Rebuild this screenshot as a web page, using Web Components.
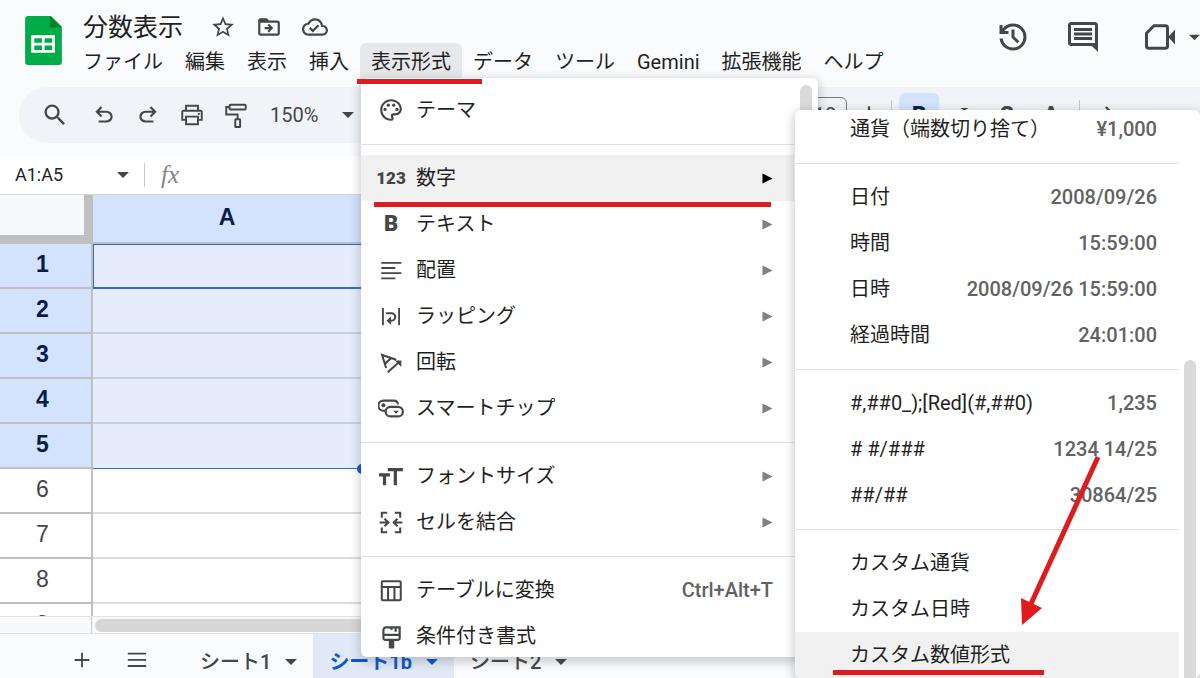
<!DOCTYPE html>
<html lang="ja">
<head>
<meta charset="utf-8">
<title>分数表示</title>
<style>
  html, body {
    margin: 0;
    height: 100%;
    overflow: hidden;
  }
  body {
    font-family: Roboto, "Noto Sans CJK JP", sans-serif;
    font-size: 20px;
    line-height: 24px;
    color: #1f1f1f;
    background-color: #f9fbfd;
  }
</style>
</head>
<body>
<sheet-app>
  <sheet-header slot="header"></sheet-header>
  <tool-bar slot="toolbar"></tool-bar>
  <formula-bar slot="formula"></formula-bar>
  <sheet-grid slot="grid"></sheet-grid>
  <tab-strip slot="tabs"></tab-strip>

  <drop-menu slot="overlay" class="format" aria-label="表示形式">
    <menu-item icon="palette">テーマ</menu-item>
    <menu-rule></menu-rule>
    <menu-item icon="number" arrow active>数字</menu-item>
    <menu-item icon="bold" arrow>テキスト</menu-item>
    <menu-item icon="align" arrow>配置</menu-item>
    <menu-item icon="wrap" arrow>ラッピング</menu-item>
    <menu-item icon="rotate" arrow>回転</menu-item>
    <menu-item icon="chip" arrow>スマートチップ</menu-item>
    <menu-rule></menu-rule>
    <menu-item icon="size" arrow>フォントサイズ</menu-item>
    <menu-item icon="merge" arrow>セルを結合</menu-item>
    <menu-rule></menu-rule>
    <menu-item icon="table" hint="Ctrl+Alt+T">テーブルに変換</menu-item>
    <menu-item icon="brush">条件付き書式</menu-item>
  </drop-menu>

  <drop-menu slot="overlay" class="number" aria-label="数字">
    <menu-item hint="¥1,000">通貨（端数切り捨て）</menu-item>
    <menu-rule></menu-rule>
    <menu-item hint="2008/09/26">日付</menu-item>
    <menu-item hint="15:59:00">時間</menu-item>
    <menu-item hint="2008/09/26 15:59:00">日時</menu-item>
    <menu-item hint="24:01:00">経過時間</menu-item>
    <menu-rule></menu-rule>
    <menu-item hint="1,235">#,##0_);[Red](#,##0)</menu-item>
    <menu-item hint="1234 14/25"># #/###</menu-item>
    <menu-item hint="30864/25">##/##</menu-item>
    <menu-rule></menu-rule>
    <menu-item>カスタム通貨</menu-item>
    <menu-item>カスタム日時</menu-item>
    <menu-item active>カスタム数値形式</menu-item>
  </drop-menu>

  <red-marks slot="overlay"></red-marks>
</sheet-app>

<script>
const icons = {
  logo: '<path fill="#00ac47" d="M2 0h15l7 7v23a2 2 0 0 1-2 2H2a2 2 0 0 1-2-2V2a2 2 0 0 1 2-2z"/><path fill="#00832d" d="M16 0l8 7.500h-8z"/><path fill="#fff" d="M4 12.500h15.500V24H4z"/><path fill="#00ac47" d="M6 14.500h5v3H6zM12.700 14.500h5v3h-5zM6 19.200h5v3H6zM12.700 19.200h5v3h-5z"/>',
  star: '<path d="M22 9.240l-7.190-.62L12 2 9.190 8.630 2 9.240l5.460 4.730L5.820 21 12 17.270 18.180 21l-1.630-7.030L22 9.240zM12 15.400l-3.760 2.270 1-4.280-3.320-2.880 4.380-.38L12 6.100l1.710 4.040 4.380.38-3.320 2.880 1 4.280L12 15.400z"/>',
  move: '<path d="M20 6h-8l-2-2H4c-1.100 0-2 .9-2 2v12c0 1.100.9 2 2 2h16c1.100 0 2-.9 2-2V8c0-1.100-.9-2-2-2zm0 12H4V8h16v10z"/><path d="M12.160 12H8v2h4.160l-1.590 1.590L11.990 17 16 13.010 11.990 9l-1.410 1.410z"/>',
  cloud: '<path d="M19.350 10.040C18.670 6.590 15.640 4 12 4 9.110 4 6.600 5.640 5.350 8.040 2.340 8.360 0 10.910 0 14c0 3.310 2.690 6 6 6h13c2.760 0 5-2.240 5-5 0-2.640-2.050-4.780-4.650-4.960zM19 18H6c-2.210 0-4-1.790-4-4 0-2.050 1.530-3.760 3.560-3.970l1.070-.11.5-.95C8.080 7.140 9.940 6 12 6c2.620 0 4.880 1.860 5.390 4.430l.3 1.500 1.530.11c1.560.1 2.780 1.410 2.780 2.960 0 1.650-1.350 3-3 3zm-9-3.820l-2.090-2.090L6.500 13.500 10 17l6.010-6.010-1.410-1.410z"/>',
  history: '<path d="M12 21q-3.450 0-6.012-2.287T3.050 13H5.100q.35 2.600 2.313 4.300T12 19q2.925 0 4.963-2.037T19 12t-2.037-4.962T12 5q-1.725 0-3.225.8T6.250 8H9v2H3V4h2v2.350q1.275-1.600 3.113-2.475T12 3q1.875 0 3.513.713t2.850 1.924 1.925 2.850T21 12t-.712 3.513-1.925 2.850-2.850 1.925T12 21m2.800-4.800L11 12.400V7h2v4.600l3.200 3.200z"/>',
  comment: '<path d="M20 2H4c-1.100 0-2 .9-2 2v12c0 1.100.9 2 2 2h14l4 4V4c0-1.100-.9-2-2-2zm0 14H4V4h16zM6 12h12v2H6zm0-3h12v2H6zm0-3h12v2H6z"/>',
  video: '<path fill="none" stroke="currentColor" stroke-width="2" d="M8 4.500h7.500a1.500 1.500 0 0 1 1.500 1.500v12a1.500 1.500 0 0 1-1.500 1.500H4.500A1.500 1.500 0 0 1 3 18V9.500z"/><path d="M17.500 12l4.500-5v10z"/>',
  search: '<path d="M15.500 14h-.79l-.28-.27A6.471 6.471 0 0 0 16 9.500 6.500 6.500 0 1 0 9.500 16c1.610 0 3.090-.59 4.230-1.570l.27.28v.79l5 4.990L20.490 19l-4.990-5zm-6 0C7.010 14 5 11.990 5 9.500S7.010 5 9.500 5 14 7.010 14 9.500 11.990 14 9.500 14z"/>',
  undo: '<path d="M7 19v-2h7.100q1.575 0 2.738-1T18 13.500 16.837 11 14.100 10H7.800l2.600 2.600L9 14 4 9l5-5 1.400 1.400L7.800 8h6.300q2.425 0 4.163 1.575T20 13.500t-1.737 3.925T14.100 19z"/>',
  redo: '<path transform="matrix(-1 0 0 1 24 0)" d="M7 19v-2h7.100q1.575 0 2.738-1T18 13.500 16.837 11 14.100 10H7.800l2.600 2.600L9 14 4 9l5-5 1.400 1.400L7.800 8h6.300q2.425 0 4.163 1.575T20 13.500t-1.737 3.925T14.100 19z"/>',
  print: '<path fill="none" stroke="currentColor" stroke-width="1.800" d="M6.500 16.500H3V9.500A1.500 1.500 0 0 1 4.500 8h15A1.500 1.500 0 0 1 21 9.500v7h-3.500M6.500 8V3.500h11V8M6.500 13.500h11V20.500h-11z"/><circle cx="18.300" cy="11" r="1"/>',
  paint: '<g fill="none" stroke="currentColor" stroke-width="1.800"><rect x="6" y="2.500" width="15" height="4.500" rx="1"/><path d="M6 4.700H3V11.500h10.500V16"/><rect x="11.300" y="16" width="4.500" height="7" rx=".5"/></g>',
  plus: '<path d="M11 4h2v7h7v2h-7v7h-2v-7H4v-2h7z"/>',
  list: '<path d="M2 4h20v2H2zm0 6.800h20v2H2zm0 6.700h20v2H2z"/>',
  fill: '<path transform="translate(4 4)" d="M16.560 8.940L7.620 0 6.210 1.410l2.380 2.380-5.150 5.150a1.490 1.490 0 0 0 0 2.120l5.500 5.500c.29.29.68.44 1.060.44s.77-.15 1.060-.44l5.500-5.500c.59-.58.59-1.530 0-2.120zM5.210 10L10 5.210 14.790 10H5.210z"/>',
  caret: '<path d="M0 6h24L12 18z"/>',
  right: '<path d="M1 1l22 11L1 23z"/>',
  palette: '<path d="M12 22C6.490 22 2 17.510 2 12S6.490 2 12 2s10 4.040 10 9c0 3.310-2.690 6-6 6h-1.770c-.28 0-.5.22-.5.5 0 .12.05.23.13.33.41.47.64 1.060.64 1.670 0 1.380-1.120 2.500-2.500 2.500zm0-18c-4.410 0-8 3.590-8 8s3.590 8 8 8c.28 0 .5-.22.5-.5 0-.16-.08-.28-.14-.35-.41-.46-.63-1.050-.63-1.650 0-1.380 1.120-2.500 2.500-2.500H16c2.210 0 4-1.790 4-4 0-3.860-3.590-7-8-7z"/><circle cx="6.500" cy="11.500" r="1.500"/><circle cx="9.500" cy="7.500" r="1.500"/><circle cx="14.500" cy="7.500" r="1.500"/><circle cx="17.500" cy="11.500" r="1.500"/>',
  align: '<path d="M3 4.500h18.500v1.700H3zm0 4.800h13v1.700H3zm0 4.800h18.500v1.700H3zm0 4.800h13v1.700H3z"/>',
  wrap: '<path d="M3.700 4.500h1.700v16H3.700zM18.600 4.500h1.700v16h-1.700z"/><path fill="none" stroke="currentColor" stroke-width="1.900" d="M7.500 9.500h5a3.300 3.300 0 0 1 0 6.800H9.500"/><path d="M12 12.500v7.500l-4.200-3.700z"/>',
  rotate: '<g fill="none" stroke="currentColor" stroke-width="1.900"><path d="M7.500 17.500L3.800 5.500l13 4.500M6.500 13.500l5.500-5M9 21.500l10.500-9.500"/></g><path d="M15.500 10.500h6v6z"/>',
  chip: '<g fill="none" stroke="currentColor" stroke-width="2"><path d="M7.500 14.500H5A4.600 4.600 0 0 1 5 5.200h9.500a4 4 0 0 1 4 3.500"/><rect x="7" y="11" width="16" height="8.800" rx="4.400"/></g><circle cx="5" cy="9.500" r="1.900"/><path d="M14 14.500h5.400l-2.700 2.700z"/>',
  size: '<path d="M9 4.500h14v3h-5.500v13h-3v-13H9zM1 9.500h10v3H7.500v8h-3v-8H1z"/>',
  merge: '<g fill="none" stroke="currentColor" stroke-width="1.900"><path d="M8.500 3.500h-5v4.500M15.500 3.500h5v4.500M8.500 21.500h-5V17M15.500 21.500h5V17M1.500 12.500h7.500M6 9l3.500 3.500L6 16M22.500 12.500H15M18 9l-3.500 3.500L18 16"/></g>',
  table: '<g fill="none" stroke="currentColor" stroke-width="1.900"><rect x="3.500" y="4" width="17.500" height="17.500" rx="1"/><path d="M3.500 9.200h17.500M9.300 9.200V21.500M15.200 9.200V21.500"/></g>',
  brush: '<g fill="none" stroke="currentColor" stroke-width="2"><path d="M7.500 4H20v10a1.500 1.500 0 0 1-1.500 1.500H6.500A1.500 1.500 0 0 1 5 14V6.500A2.500 2.500 0 0 1 7.500 4zM5 11h15M12.500 4v2.500M16.300 4v4"/></g><path d="M10 15.500h5v7a1 1 0 0 1-1 1h-3a1 1 0 0 1-1-1z"/>'
}

// icons that are characters stay text
const glyphs = { number: '123', bold: 'B', italic: 'I', strike: 'S', color: 'A' }

function define (name, html, setup) {
  const template = document.createElement('template')
  template.innerHTML = html
  customElements.define(name, class extends HTMLElement {
    constructor () {
      super()
      this.attachShadow({ mode: 'open' })
        .appendChild(template.content.cloneNode(true))
      if (setup) {
        setup(this, this.shadowRoot)
      }
    }
  })
}

define('ui-icon', `
  <style>
    :host {
      display: inline-flex;
      flex: none;
      justify-content: center;
      align-items: center;
      width: var(--size, 26px);
      height: var(--size, 26px);
      color: inherit;
    }
    svg {
      display: block;
      width: 100%;
      height: 100%;
      fill: currentColor;
    }
    span {
      font-weight: 900;
      font-size: 22px;
      line-height: 24px;
    }
    .number {
      font-size: 17px;
    }
    .italic {
      font-family: "Liberation Serif", serif;
      font-style: italic;
    }
  </style>
`, (host, root) => {
  const name = host.getAttribute('name')
  if (!name) return
  const holder = document.createElement('template')
  holder.innerHTML = glyphs[name]
    ? `<span class="${name}">${glyphs[name]}</span>`
    : `<svg viewBox="${name === 'logo' ? '0 0 24 32' : '0 0 24 24'}" aria-hidden="true">${icons[name]}</svg>`
  root.appendChild(holder.content)
})

define('sheet-app', `
  <style>
    :host {
      position: relative;
      display: flex;
      flex-direction: column;
      height: 100vh;
      overflow: hidden;
    }
    .grid {
      flex: 1;
      min-height: 0;
      overflow: hidden;
      background-color: white;
    }
    .track {
      display: flex;
      flex: none;
      height: 18px;
      box-sizing: border-box;
      border-top: 1px solid #e1e3e1;
      border-bottom: 1px solid #e1e3e1;
      background-color: #f8f9fa;
    }
    .corner {
      width: 91px;
      border-right: 1px solid #c4c7c5;
    }
    .thumb {
      flex: 1;
      margin: 2px 3px 1px;
      border-radius: 7px;
      background-color: #d6d6d6;
    }
    ::slotted(.format) {
      position: absolute;
      left: 361px;
      top: 78px;
      width: 457px;
      height: 579px;
      --pad-top: 9px;
      --gutter: 24px;
      --thumb-top: 7px;
      --thumb-right: 6px;
    }
    ::slotted(.number) {
      position: absolute;
      left: 795px;
      right: 0;
      top: 110px;
      bottom: 0;
      --pad-top: 0;
      --scrolled: -4px;
      --gutter: 21px;
      --item-left: 55px;
      --item-right: 22px;
      --thumb-top: 250px;
      --thumb-right: 4px;
    }
    ::slotted(red-marks) {
      position: absolute;
      inset: 0;
    }
  </style>
  <slot name="header"></slot>
  <slot name="toolbar"></slot>
  <slot name="formula"></slot>
  <div class="grid"><slot name="grid"></slot></div>
  <div class="track"><div class="corner"></div><div class="thumb"></div></div>
  <slot name="tabs"></slot>
  <slot name="overlay"></slot>
`)

define('sheet-header', `
  <style>
    :host {
      display: flex;
      flex: none;
      height: 87px;
    }
    .logo {
      --size: 49px;
      margin: 16px 4px 0 19px;
    }
    .name {
      display: flex;
      align-items: center;
      height: 43px;
      padding: 11px 0 0 11px;
      box-sizing: border-box;
      color: #444746;
    }
    input {
      width: 117px;
      padding: 0 0 4px;
      border: none;
      background: none;
      font: inherit;
      font-size: 25px;
      color: #1f1f1f;
    }
    button {
      display: flex;
      justify-content: center;
      align-items: center;
      padding: 0;
      border: none;
      background: none;
      font: inherit;
      color: inherit;
    }
    .name button {
      width: 46px;
      --size: 26px;
    }
    nav {
      display: flex;
      white-space: nowrap;
    }
    nav button {
      height: 38px;
      padding: 0 11px;
      border-radius: 6px 6px 0 0;
    }
    nav .open {
      background-color: #e7e8eb;
    }
    .actions {
      display: flex;
      align-items: center;
      height: 74px;
      margin-left: auto;
      color: #444746;
      --size: 36px;
    }
    .actions button {
      width: 70px;
    }
    .actions .meet {
      width: 82px;
      justify-content: flex-end;
      gap: 11px;
    }
    .meet .caret {
      --size: 11px;
    }
  </style>
  <ui-icon class="logo" name="logo"></ui-icon>
  <div>
    <div class="name">
      <input value="分数表示" aria-label="名前">
      <button aria-label="スター"><ui-icon name="star"></ui-icon></button>
      <button aria-label="移動"><ui-icon name="move"></ui-icon></button>
      <button aria-label="保存状況"><ui-icon name="cloud"></ui-icon></button>
    </div>
    <nav>
      <button>ファイル</button>
      <button>編集</button>
      <button>表示</button>
      <button>挿入</button>
      <button class="open">表示形式</button>
      <button>データ</button>
      <button>ツール</button>
      <button>Gemini</button>
      <button>拡張機能</button>
      <button>ヘルプ</button>
    </nav>
  </div>
  <div class="actions">
    <button aria-label="変更履歴"><ui-icon name="history"></ui-icon></button>
    <button aria-label="コメント"><ui-icon name="comment"></ui-icon></button>
    <button class="meet" aria-label="通話"><ui-icon name="video"></ui-icon><ui-icon class="caret" name="caret"></ui-icon></button>
  </div>
`)

define('tool-bar', `
  <style>
    :host {
      display: flex;
      flex: none;
      align-items: center;
      height: 56px;
      margin-left: 19px;
      padding-left: 14px;
      border-radius: 28px 0 0 28px;
      overflow: hidden;
      background-color: #f0f4f9;
      color: #444746;
    }
    button {
      display: flex;
      flex: none;
      justify-content: center;
      align-items: center;
      width: 40px;
      height: 44px;
      margin: 0 2px;
      padding: 0;
      border: none;
      border-radius: 6px;
      background: none;
      font: inherit;
      color: inherit;
    }
    .search {
      margin-right: 7px;
      --size: 28px;
    }
    .on {
      background-color: #d3e3fd;
      color: #041e49;
    }
    label {
      display: flex;
      flex: none;
      align-items: center;
      width: 84px;
      margin: 0 7px 0 12px;
      --size: 12px;
    }
    select {
      flex: 1;
      padding: 0;
      border: none;
      appearance: none;
      background: none;
      font: inherit;
      color: inherit;
    }
    .gap {
      flex: none;
      width: 442px;
    }
    .points {
      flex: none;
      width: 44px;
      height: 36px;
      box-sizing: border-box;
      border: 1px solid #747775;
      border-radius: 6px;
      background: none;
      text-align: center;
      font: inherit;
      color: inherit;
    }
    hr {
      flex: none;
      width: 1px;
      height: 30px;
      margin: 0 5px 0 0;
      border: none;
      background-color: #c7c7c7;
    }
    hr.wide {
      margin-left: 6px;
    }
  </style>
  <button class="search" aria-label="検索"><ui-icon name="search"></ui-icon></button>
  <button aria-label="元に戻す"><ui-icon name="undo"></ui-icon></button>
  <button aria-label="やり直し"><ui-icon name="redo"></ui-icon></button>
  <button aria-label="印刷"><ui-icon name="print"></ui-icon></button>
  <button aria-label="書式を貼り付け"><ui-icon name="paint"></ui-icon></button>
  <label><select aria-label="ズーム"><option>150%</option></select><ui-icon name="caret"></ui-icon></label>
  <div class="gap"></div>
  <input class="points" value="10" aria-label="フォントサイズ">
  <button aria-label="拡大"><ui-icon name="plus"></ui-icon></button>
  <hr>
  <button class="on" aria-label="太字"><ui-icon name="bold"></ui-icon></button>
  <button aria-label="斜体"><ui-icon name="italic"></ui-icon></button>
  <button aria-label="取り消し線"><ui-icon name="strike"></ui-icon></button>
  <button aria-label="文字色"><ui-icon name="color"></ui-icon></button>
  <hr class="wide">
  <button aria-label="塗りつぶし"><ui-icon name="fill"></ui-icon></button>
`)

define('formula-bar', `
  <style>
    :host {
      display: flex;
      flex: none;
      align-items: center;
      height: 39px;
      box-sizing: border-box;
      margin-top: 13px;
      border-bottom: 1px solid #d5d7d6;
      background-color: white;
    }
    input {
      width: 102px;
      padding: 0 0 0 15px;
      border: none;
      background: none;
      font: inherit;
      font-size: 18px;
      color: #1f1f1f;
    }
    ui-icon {
      --size: 12px;
      color: #444746;
    }
    hr {
      width: 1px;
      height: 24px;
      margin: 0 16px 0 15px;
      border: none;
      background-color: #c7c7c7;
    }
    i {
      font-family: "Liberation Serif", serif;
      font-size: 25px;
      color: #80868b;
    }
  </style>
  <input value="A1:A5" aria-label="名前ボックス">
  <ui-icon name="caret"></ui-icon>
  <hr>
  <i>fx</i>
`)

define('sheet-grid', `
  <style>
    :host {
      display: block;
      font-family: "Liberation Sans", Arial, sans-serif;
      font-size: 23px;
      color: #444746;
    }
    table {
      width: 100%;
      table-layout: fixed;
      border-collapse: separate;
      border-spacing: 0;
    }
    th, td {
      box-sizing: border-box;
      height: 45px;
      padding: 0 0 4px;
      border-right: 2px solid #c0c0c0;
      border-bottom: 2px solid #c0c0c0;
      font-weight: normal;
    }
    td {
      border-color: #dcdcdc;
    }
    .index {
      width: 93px;
    }
    .first {
      width: 270px;
    }
    th {
      padding-right: 6px;
    }
    thead th {
      height: 49px;
      padding-right: 0;
    }
    thead .index {
      border-right: 9px solid #c0c0c0;
      border-bottom: 9px solid #c0c0c0;
      background-color: #f8f9fa;
    }
    th.picked {
      background-color: #d3e3fd;
      font-weight: bold;
      color: #041e49;
    }
    td.picked {
      border-color: #c6d0db;
      background-color: #e5edfd;
    }
    td.cursor {
      border: 2px solid #3367d1;
      border-top-width: 1px;
      border-left-width: 1px;
    }
    td.last {
      position: relative;
      border-bottom: 1px solid #3367d1;
    }
    td.last::after {
      content: "";
      position: absolute;
      right: -6px;
      bottom: -6px;
      width: 10px;
      height: 10px;
      border-radius: 50%;
      background-color: #0b57d0;
    }
  </style>
  <table>
    <thead><tr><th class="index"></th><th class="first picked">A</th><th></th></tr></thead>
    <tbody></tbody>
  </table>
`, (host, root) => {
  const body = root.querySelector('tbody')
  for (let i = 1; i <= 9; i++) {
    const picked = i <= 5 ? 'picked' : ''
    const edge = i === 1 ? 'cursor' : i === 5 ? 'last' : ''
    body.insertAdjacentHTML('beforeend',
      `<tr><th class="${picked}">${i}</th><td class="${picked} ${edge}"></td><td></td></tr>`)
  }
})

define('tab-strip', `
  <style>
    :host {
      display: flex;
      flex: none;
      height: 44px;
      padding-left: 54px;
      overflow: hidden;
      background-color: #f9fbfd;
      color: #444746;
    }
    button {
      display: flex;
      flex: none;
      justify-content: center;
      align-items: center;
      gap: 14px;
      height: 56px;
      padding: 0 16px;
      border: none;
      background: none;
      font: inherit;
      font-weight: 500;
      color: inherit;
      white-space: nowrap;
      --size: 12px;
    }
    .tool {
      width: 55px;
      height: 52px;
      padding: 0;
      --size: 22px;
    }
    .tool + .tool {
      margin-right: 20px;
    }
    .current {
      background-color: #e1e9f7;
      font-weight: bold;
      color: #0b57d0;
    }
  </style>
  <button class="tool" aria-label="シートを追加"><ui-icon name="plus"></ui-icon></button>
  <button class="tool" aria-label="すべてのシート"><ui-icon name="list"></ui-icon></button>
  <button>シート1<ui-icon name="caret"></ui-icon></button>
  <button class="current">シート1b<ui-icon name="caret"></ui-icon></button>
  <button>シート2<ui-icon name="caret"></ui-icon></button>
`)

define('drop-menu', `
  <style>
    :host {
      display: block;
      border-radius: 6px;
      box-shadow: 0 3px 10px 2px rgba(60, 64, 67, 0.24);
      background-color: white;
    }
    .view {
      display: flex;
      height: 100%;
      overflow: hidden;
      border-radius: inherit;
    }
    .items {
      flex: 1;
      min-width: 0;
      margin-top: var(--scrolled, 0);
      padding-top: var(--pad-top);
    }
    .scroll {
      display: flex;
      justify-content: flex-end;
      width: var(--gutter);
      padding: var(--thumb-top) var(--thumb-right) 0 0;
      box-sizing: border-box;
    }
    .thumb {
      width: 12px;
      border-radius: 6px 6px 0 0;
      background-color: #dadada;
    }
  </style>
  <div class="view">
    <div class="items" role="menu"><slot></slot></div>
    <div class="scroll"><div class="thumb"></div></div>
  </div>
`)

define('menu-rule', `
  <style>
    :host {
      display: block;
      height: 1px;
      margin: 11px 0 10px;
      background-color: #e0e2e1;
    }
  </style>
`)

define('menu-item', `
  <style>
    :host {
      display: block;
    }
    button {
      display: flex;
      align-items: center;
      gap: 12px;
      width: 100%;
      height: 46px;
      padding: 0 var(--item-right, 21px) 0 var(--item-left, 17px);
      border: none;
      background: none;
      font: inherit;
      color: #1f1f1f;
      text-align: left;
      white-space: nowrap;
    }
    :host([active]) button {
      background-color: #f1f1f1;
    }
    .label {
      flex: 1;
    }
    .hint {
      font-weight: 500;
      color: #5f6361;
    }
    .icon {
      color: #444746;
    }
    .arrow {
      --size: 11px;
      color: #808080;
    }
    :host([active]) .arrow {
      color: black;
    }
  </style>
  <button role="menuitem"><span class="label"><slot></slot></span></button>
`, (host, root) => {
  const button = root.querySelector('button')
  if (host.hasAttribute('icon')) {
    button.insertAdjacentHTML('afterbegin', `<ui-icon class="icon" name="${host.getAttribute('icon')}"></ui-icon>`)
  }
  if (host.hasAttribute('hint')) {
    button.insertAdjacentHTML('beforeend', `<span class="hint">${host.getAttribute('hint')}</span>`)
  }
  if (host.hasAttribute('arrow')) {
    button.insertAdjacentHTML('beforeend', '<ui-icon class="arrow" name="right"></ui-icon>')
  }
})

define('red-marks', `
  <style>
    :host {
      display: block;
      overflow: hidden;
      pointer-events: none;
    }
    svg {
      display: block;
      width: 1200px;
      height: 678px;
      stroke: #e01b1e;
      stroke-width: 5;
      fill: #e01b1e;
    }
    polygon {
      stroke: none;
    }
  </style>
  <svg viewBox="0 0 1200 678" aria-hidden="true">
    <path d="M357 81.500H482M374 204.500H771M833 672.500H1044M1098 457L1030 606"/>
    <polygon points="1021,598 1042,608 1022,625"/>
  </svg>
`)
</script>
</body>
</html>
